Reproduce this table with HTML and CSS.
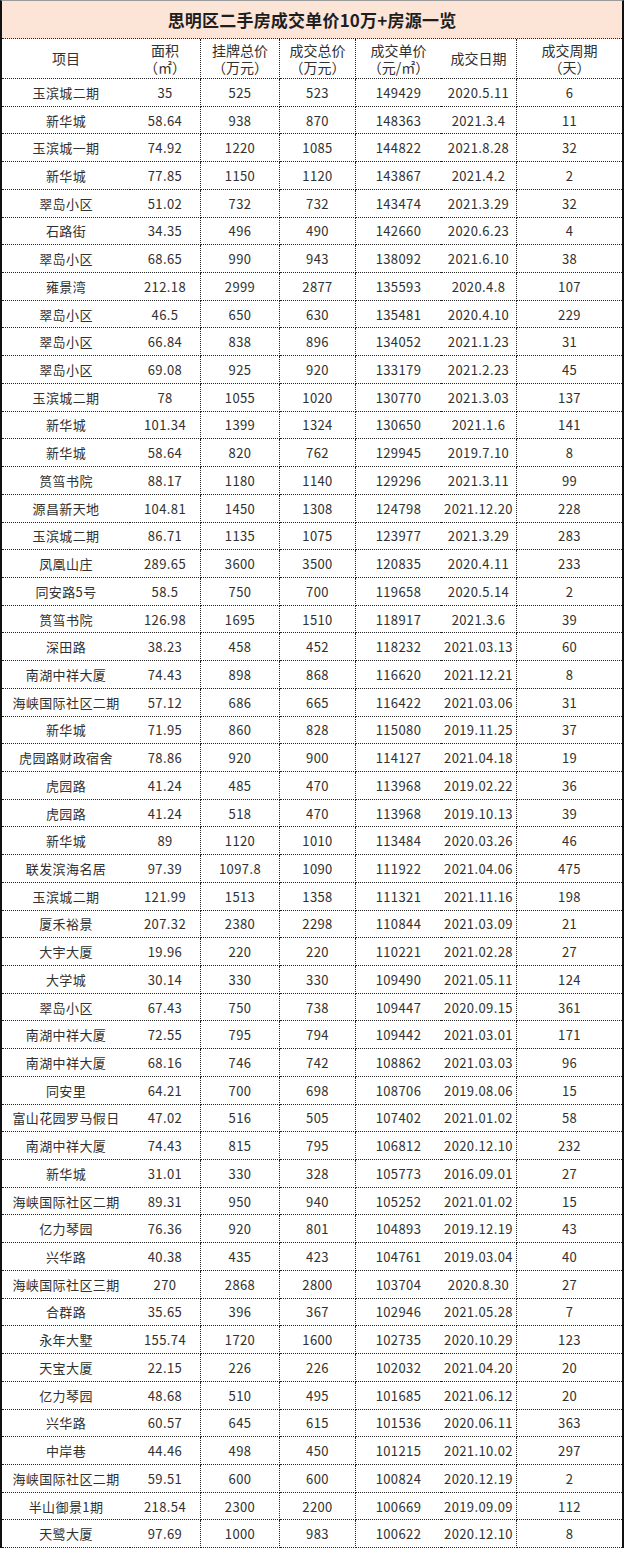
FILE: index.html
```html
<!DOCTYPE html>
<html lang="zh-CN">
<head>
<meta charset="utf-8">
<title>思明区二手房成交单价10万+房源一览</title>
<link rel="stylesheet" href="styles.css">
</head>
<body>
<div class="sheet">
  <div class="title">思明区二手房成交单价10万+房源一览</div>

  <div class="c hd">项目</div>
  <div class="c hd vr">面积<br>（㎡）</div>
  <div class="c hd vr">挂牌总价<br>（万元）</div>
  <div class="c hd vr">成交总价<br>（万元）</div>
  <div class="c hd">成交单价<br>（元/㎡）</div>
  <div class="c hd vr">成交日期</div>
  <div class="c hd">成交周期<br>（天）</div>

  <div class="c">玉滨城二期</div><div class="c vr">35</div><div class="c vr">525</div><div class="c vr">523</div><div class="c">149429</div><div class="c vr">2020.5.11</div><div class="c">6</div>
  <div class="c">新华城</div><div class="c vr">58.64</div><div class="c vr">938</div><div class="c vr">870</div><div class="c">148363</div><div class="c vr">2021.3.4</div><div class="c">11</div>
  <div class="c">玉滨城一期</div><div class="c vr">74.92</div><div class="c vr">1220</div><div class="c vr">1085</div><div class="c">144822</div><div class="c vr">2021.8.28</div><div class="c">32</div>
  <div class="c">新华城</div><div class="c vr">77.85</div><div class="c vr">1150</div><div class="c vr">1120</div><div class="c">143867</div><div class="c vr">2021.4.2</div><div class="c">2</div>
  <div class="c">翠岛小区</div><div class="c vr">51.02</div><div class="c vr">732</div><div class="c vr">732</div><div class="c">143474</div><div class="c vr">2021.3.29</div><div class="c">32</div>
  <div class="c">石路街</div><div class="c vr">34.35</div><div class="c vr">496</div><div class="c vr">490</div><div class="c">142660</div><div class="c vr">2020.6.23</div><div class="c">4</div>
  <div class="c">翠岛小区</div><div class="c vr">68.65</div><div class="c vr">990</div><div class="c vr">943</div><div class="c">138092</div><div class="c vr">2021.6.10</div><div class="c">38</div>
  <div class="c">雍景湾</div><div class="c vr">212.18</div><div class="c vr">2999</div><div class="c vr">2877</div><div class="c">135593</div><div class="c vr">2020.4.8</div><div class="c">107</div>
  <div class="c">翠岛小区</div><div class="c vr">46.5</div><div class="c vr">650</div><div class="c vr">630</div><div class="c">135481</div><div class="c vr">2020.4.10</div><div class="c">229</div>
  <div class="c">翠岛小区</div><div class="c vr">66.84</div><div class="c vr">838</div><div class="c vr">896</div><div class="c">134052</div><div class="c vr">2021.1.23</div><div class="c">31</div>
  <div class="c">翠岛小区</div><div class="c vr">69.08</div><div class="c vr">925</div><div class="c vr">920</div><div class="c">133179</div><div class="c vr">2021.2.23</div><div class="c">45</div>
  <div class="c">玉滨城二期</div><div class="c vr">78</div><div class="c vr">1055</div><div class="c vr">1020</div><div class="c">130770</div><div class="c vr">2021.3.03</div><div class="c">137</div>
  <div class="c">新华城</div><div class="c vr">101.34</div><div class="c vr">1399</div><div class="c vr">1324</div><div class="c">130650</div><div class="c vr">2021.1.6</div><div class="c">141</div>
  <div class="c">新华城</div><div class="c vr">58.64</div><div class="c vr">820</div><div class="c vr">762</div><div class="c">129945</div><div class="c vr">2019.7.10</div><div class="c">8</div>
  <div class="c">筼筜书院</div><div class="c vr">88.17</div><div class="c vr">1180</div><div class="c vr">1140</div><div class="c">129296</div><div class="c vr">2021.3.11</div><div class="c">99</div>
  <div class="c">源昌新天地</div><div class="c vr">104.81</div><div class="c vr">1450</div><div class="c vr">1308</div><div class="c">124798</div><div class="c vr">2021.12.20</div><div class="c">228</div>
  <div class="c">玉滨城二期</div><div class="c vr">86.71</div><div class="c vr">1135</div><div class="c vr">1075</div><div class="c">123977</div><div class="c vr">2021.3.29</div><div class="c">283</div>
  <div class="c">凤凰山庄</div><div class="c vr">289.65</div><div class="c vr">3600</div><div class="c vr">3500</div><div class="c">120835</div><div class="c vr">2020.4.11</div><div class="c">233</div>
  <div class="c">同安路5号</div><div class="c vr">58.5</div><div class="c vr">750</div><div class="c vr">700</div><div class="c">119658</div><div class="c vr">2020.5.14</div><div class="c">2</div>
  <div class="c">筼筜书院</div><div class="c vr">126.98</div><div class="c vr">1695</div><div class="c vr">1510</div><div class="c">118917</div><div class="c vr">2021.3.6</div><div class="c">39</div>
  <div class="c">深田路</div><div class="c vr">38.23</div><div class="c vr">458</div><div class="c vr">452</div><div class="c">118232</div><div class="c vr">2021.03.13</div><div class="c">60</div>
  <div class="c">南湖中祥大厦</div><div class="c vr">74.43</div><div class="c vr">898</div><div class="c vr">868</div><div class="c">116620</div><div class="c vr">2021.12.21</div><div class="c">8</div>
  <div class="c">海峡国际社区二期</div><div class="c vr">57.12</div><div class="c vr">686</div><div class="c vr">665</div><div class="c">116422</div><div class="c vr">2021.03.06</div><div class="c">31</div>
  <div class="c">新华城</div><div class="c vr">71.95</div><div class="c vr">860</div><div class="c vr">828</div><div class="c">115080</div><div class="c vr">2019.11.25</div><div class="c">37</div>
  <div class="c">虎园路财政宿舍</div><div class="c vr">78.86</div><div class="c vr">920</div><div class="c vr">900</div><div class="c">114127</div><div class="c vr">2021.04.18</div><div class="c">19</div>
  <div class="c">虎园路</div><div class="c vr">41.24</div><div class="c vr">485</div><div class="c vr">470</div><div class="c">113968</div><div class="c vr">2019.02.22</div><div class="c">36</div>
  <div class="c">虎园路</div><div class="c vr">41.24</div><div class="c vr">518</div><div class="c vr">470</div><div class="c">113968</div><div class="c vr">2019.10.13</div><div class="c">39</div>
  <div class="c">新华城</div><div class="c vr">89</div><div class="c vr">1120</div><div class="c vr">1010</div><div class="c">113484</div><div class="c vr">2020.03.26</div><div class="c">46</div>
  <div class="c">联发滨海名居</div><div class="c vr">97.39</div><div class="c vr">1097.8</div><div class="c vr">1090</div><div class="c">111922</div><div class="c vr">2021.04.06</div><div class="c">475</div>
  <div class="c">玉滨城二期</div><div class="c vr">121.99</div><div class="c vr">1513</div><div class="c vr">1358</div><div class="c">111321</div><div class="c vr">2021.11.16</div><div class="c">198</div>
  <div class="c">厦禾裕景</div><div class="c vr">207.32</div><div class="c vr">2380</div><div class="c vr">2298</div><div class="c">110844</div><div class="c vr">2021.03.09</div><div class="c">21</div>
  <div class="c">大宇大厦</div><div class="c vr">19.96</div><div class="c vr">220</div><div class="c vr">220</div><div class="c">110221</div><div class="c vr">2021.02.28</div><div class="c">27</div>
  <div class="c">大学城</div><div class="c vr">30.14</div><div class="c vr">330</div><div class="c vr">330</div><div class="c">109490</div><div class="c vr">2021.05.11</div><div class="c">124</div>
  <div class="c">翠岛小区</div><div class="c vr">67.43</div><div class="c vr">750</div><div class="c vr">738</div><div class="c">109447</div><div class="c vr">2020.09.15</div><div class="c">361</div>
  <div class="c">南湖中祥大厦</div><div class="c vr">72.55</div><div class="c vr">795</div><div class="c vr">794</div><div class="c">109442</div><div class="c vr">2021.03.01</div><div class="c">171</div>
  <div class="c">南湖中祥大厦</div><div class="c vr">68.16</div><div class="c vr">746</div><div class="c vr">742</div><div class="c">108862</div><div class="c vr">2021.03.03</div><div class="c">96</div>
  <div class="c">同安里</div><div class="c vr">64.21</div><div class="c vr">700</div><div class="c vr">698</div><div class="c">108706</div><div class="c vr">2019.08.06</div><div class="c">15</div>
  <div class="c">富山花园罗马假日</div><div class="c vr">47.02</div><div class="c vr">516</div><div class="c vr">505</div><div class="c">107402</div><div class="c vr">2021.01.02</div><div class="c">58</div>
  <div class="c">南湖中祥大厦</div><div class="c vr">74.43</div><div class="c vr">815</div><div class="c vr">795</div><div class="c">106812</div><div class="c vr">2020.12.10</div><div class="c">232</div>
  <div class="c">新华城</div><div class="c vr">31.01</div><div class="c vr">330</div><div class="c vr">328</div><div class="c">105773</div><div class="c vr">2016.09.01</div><div class="c">27</div>
  <div class="c">海峡国际社区二期</div><div class="c vr">89.31</div><div class="c vr">950</div><div class="c vr">940</div><div class="c">105252</div><div class="c vr">2021.01.02</div><div class="c">15</div>
  <div class="c">亿力琴园</div><div class="c vr">76.36</div><div class="c vr">920</div><div class="c vr">801</div><div class="c">104893</div><div class="c vr">2019.12.19</div><div class="c">43</div>
  <div class="c">兴华路</div><div class="c vr">40.38</div><div class="c vr">435</div><div class="c vr">423</div><div class="c">104761</div><div class="c vr">2019.03.04</div><div class="c">40</div>
  <div class="c">海峡国际社区三期</div><div class="c vr">270</div><div class="c vr">2868</div><div class="c vr">2800</div><div class="c">103704</div><div class="c vr">2020.8.30</div><div class="c">27</div>
  <div class="c">合群路</div><div class="c vr">35.65</div><div class="c vr">396</div><div class="c vr">367</div><div class="c">102946</div><div class="c vr">2021.05.28</div><div class="c">7</div>
  <div class="c">永年大墅</div><div class="c vr">155.74</div><div class="c vr">1720</div><div class="c vr">1600</div><div class="c">102735</div><div class="c vr">2020.10.29</div><div class="c">123</div>
  <div class="c">天宝大厦</div><div class="c vr">22.15</div><div class="c vr">226</div><div class="c vr">226</div><div class="c">102032</div><div class="c vr">2021.04.20</div><div class="c">20</div>
  <div class="c">亿力琴园</div><div class="c vr">48.68</div><div class="c vr">510</div><div class="c vr">495</div><div class="c">101685</div><div class="c vr">2021.06.12</div><div class="c">20</div>
  <div class="c">兴华路</div><div class="c vr">60.57</div><div class="c vr">645</div><div class="c vr">615</div><div class="c">101536</div><div class="c vr">2020.06.11</div><div class="c">363</div>
  <div class="c">中岸巷</div><div class="c vr">44.46</div><div class="c vr">498</div><div class="c vr">450</div><div class="c">101215</div><div class="c vr">2021.10.02</div><div class="c">297</div>
  <div class="c">海峡国际社区二期</div><div class="c vr">59.51</div><div class="c vr">600</div><div class="c vr">600</div><div class="c">100824</div><div class="c vr">2020.12.19</div><div class="c">2</div>
  <div class="c">半山御景1期</div><div class="c vr">218.54</div><div class="c vr">2300</div><div class="c vr">2200</div><div class="c">100669</div><div class="c vr">2019.09.09</div><div class="c">112</div>
  <div class="c">天鹭大厦</div><div class="c vr">97.69</div><div class="c vr">1000</div><div class="c vr">983</div><div class="c">100622</div><div class="c vr">2020.12.10</div><div class="c">8</div>
</div>
</body>
</html>
```

FILE: styles.css
```css
html, body {
  margin: 0;
  padding: 0;
  background: #ffffff;
}

.sheet {
  box-sizing: border-box;
  width: 624px;
  display: grid;
  grid-template-columns: 128px 71px 79px 76px 85px 76px 1fr;
  grid-template-rows: 38px 40px repeat(53, 27.73px);
  border-left: 2px solid #111;
  border-right: 2px solid #111;
  border-top: 1px solid #9a9a9a;
  font-family: "Noto Sans CJK SC", "Noto Sans", sans-serif;
  color: #303030;
}

.title {
  grid-column: 1 / -1;
  display: flex;
  align-items: center;
  justify-content: center;
  background: #fce4d6;
  border-bottom: 1px dotted #222;
  font-size: 17px;
  font-weight: 700;
  color: #1e1e1e;
  letter-spacing: 0.2px;
}

.c {
  box-sizing: border-box;
  display: flex;
  align-items: center;
  justify-content: center;
  text-align: center;
  border-bottom: 1px dotted #222;
  font-size: 13px;
  line-height: 1;
  letter-spacing: 0.4px;
  white-space: nowrap;
}

.hd {
  font-size: 14px;
  line-height: 17px;
  letter-spacing: 0;
}

.vr {
  border-right: 1px dotted #222;
}
```
